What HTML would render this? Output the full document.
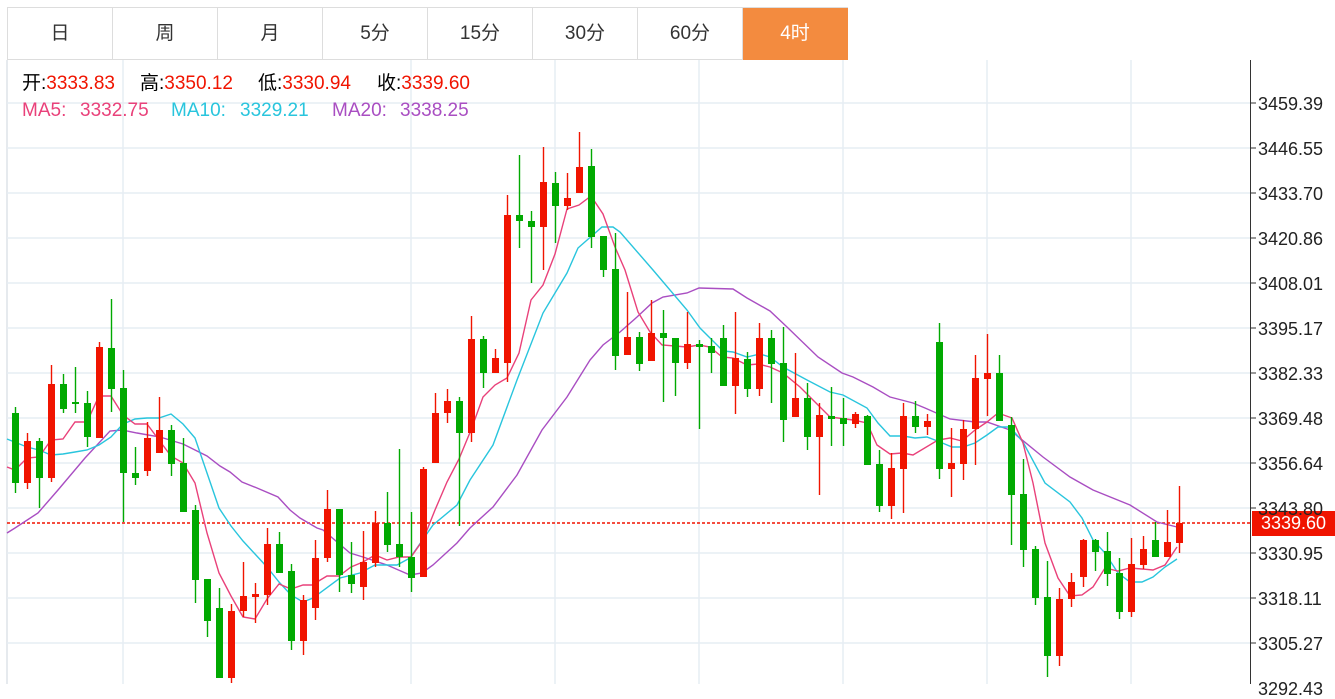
<!DOCTYPE html>
<html><head><meta charset="utf-8"><style>
*{margin:0;padding:0;box-sizing:border-box}
body{width:1335px;height:684px;overflow:hidden;background:#fff;font-family:"Liberation Sans","Noto Sans CJK SC",sans-serif;position:relative}
.tabs{position:absolute;left:7px;top:7px;height:53px;display:flex;border-top:1px solid #ddd;border-left:1px solid #ddd}
.tabs div{width:105px;height:52px;border-right:1px solid #ddd;border-bottom:1px solid #ddd;font-size:19px;color:#333;text-align:center;line-height:52px}
.tabs div.on{background:#f38b3f;color:#fff;border-color:#f38b3f}
.t{position:absolute;font-size:19px;white-space:pre;line-height:22px}
.r{color:#f01400}
.ax{position:absolute;left:1258px;font-size:18px;color:#222;line-height:20px}
</style></head><body>
<svg width="1335" height="684" style="position:absolute;left:0;top:0">
<g stroke="#e6edf3" stroke-width="1.5">
<line x1="7" y1="60" x2="7" y2="684" stroke="#dde3e8"/>
<path d="M7 103H1250M7 148H1250M7 193H1250M7 238H1250M7 283H1250M7 328H1250M7 373H1250M7 418H1250M7 463H1250M7 508H1250M7 553H1250M7 598H1250M7 643H1250"/>
<path d="M123 60V684M411 60V684M555 60V684M699 60V684M843 60V684M987 60V684M1131 60V684"/>
</g>
<line x1="1250.5" y1="60" x2="1250.5" y2="684" stroke="#333" stroke-width="1"/>
<path d="M1250 103h6M1250 148h6M1250 193h6M1250 238h6M1250 283h6M1250 328h6M1250 373h6M1250 418h6M1250 463h6M1250 508h6M1250 553h6M1250 598h6M1250 643h6" stroke="#333"/>
<line x1="7" y1="523" x2="1250" y2="523" stroke="#f01400" stroke-width="1.5" stroke-dasharray="3,2"/>
<g fill="none" stroke-width="1.4">
<polyline stroke="#a94ec2" points="7,533 15,528 38,513 58,490 85,458 110,431 122,430 137,433 160,437 183,444 207,456 220,466 230,472 242,482 257,488 278,497 290,510 300,518 317,528 323,530 350,553 363,557 387,565 410,575 422,573 433,565 457,543 470,528 493,507 517,475 542,430 567,397 590,360 603,345 620,332 637,317 652,303 663,297 687,293 699,288 733,289 747,298 770,311 787,327 818,357 842,373 853,377 873,387 890,397 913,403 925,408 950,419 975,422 987,422 1010,430 1043,457 1070,477 1093,490 1130,505 1157,522 1177,527"/>
<polyline stroke="#29c5dd" points="7,439 27,447 39,450 51,455 63,454 75,452 87,450 99,445 111,437 123,424 135,419 147,418 159,418 171,414 183,424 195,438 207,473 219,508 231,526 243,541 255,554 267,567 279,582 291,595 303,602 313,598 340,578 360,573 375,565 397,565 410,558 433,525 457,505 470,480 493,445 517,380 543,313 567,273 578,248 602,227 613,227 620,232 653,270 687,310 700,328 723,351 733,352 747,357 760,354 770,357 783,367 807,380 830,392 843,395 867,408 878,423 890,436 903,436 915,438 927,437 940,442 952,447 963,447 975,443 987,435 998,427 1010,427 1023,442 1045,483 1070,502 1082,518 1093,540 1105,553 1118,573 1130,582 1142,582 1153,577 1165,567 1177,559"/>
<polyline stroke="#e9417a" points="7,467 15,470 27,458 39,457 51,440 63,439 75,422 87,422 99,396 111,396 123,415 135,424 147,424 159,440 171,456 183,463 195,483 207,533 219,573 231,596 243,617 255,619 267,599 279,584 291,589 303,585 312,585 327,576 339,576 351,567 363,562 375,555 387,560 399,557 411,557 423,540 435,510 447,482 459,459 471,430 483,397 495,385 507,378 519,353 531,300 543,285 555,254 567,209 579,205 591,196 603,214 615,247 625,270 638,312 650,332 662,345 687,347 699,345 710,347 722,357 733,358 747,365 758,364 770,367 783,373 800,387 813,400 830,417 853,420 867,423 877,445 890,454 902,453 913,455 938,440 950,438 962,441 975,430 987,422 998,413 1012,418 1023,443 1033,483 1045,543 1058,578 1070,596 1082,595 1093,587 1105,568 1118,571 1130,568 1142,569 1153,570 1165,565 1177,547"/>
</g>
<path stroke="#01a901" stroke-width="1.4" fill="none" d="M15.5 407V493M39.5 438V508M63.5 374V413M75.5 367V413M87.5 391V447M111.5 299V412M123.5 370V522M135.5 447V485M171.5 425V476M183.5 438V512M195.5 505V603M207.5 579V637M219.5 588V678M279.5 532V573M291.5 564V650M339.5 509V592M351.5 542V593M387.5 492V552M399.5 449V567M411.5 512V592M459.5 397V526M483.5 336V388M519.5 155V248M531.5 211V283M555.5 172V243M591.5 149V248M603.5 236V277M615.5 233V370M639.5 332V371M663.5 310V402M675.5 338V396M699.5 340V429M711.5 338V373M723.5 325V386M747.5 352V397M771.5 330V403M783.5 327V442M807.5 383V450M831.5 387V446M843.5 398V446M867.5 415V465M879.5 450V512M915.5 401V433M939.5 323V479M999.5 355V421M1011.5 417V545M1023.5 459V567M1035.5 546V605M1047.5 561V677M1095.5 539V571M1107.5 532V586M1119.5 558V619M1155.5 522V557"/>
<path fill="#01a901" d="M12 413h7v70h-7zM36 441h7v37h-7zM60 384h7v25h-7zM72 402h7v2h-7zM84 403h7v34h-7zM108 348h7v41h-7zM120 388h7v85h-7zM132 473h7v5h-7zM168 430h7v34h-7zM180 463h7v49h-7zM192 510h7v70h-7zM204 579h7v42h-7zM216 608h7v70h-7zM276 544h7v29h-7zM288 571h7v70h-7zM336 509h7v66h-7zM348 575h7v9h-7zM384 523h7v22h-7zM396 544h7v13h-7zM408 557h7v21h-7zM456 401h7v32h-7zM480 339h7v34h-7zM516 215h7v6h-7zM528 221h7v6h-7zM552 183h7v23h-7zM588 166h7v71h-7zM600 236h7v34h-7zM612 269h7v87h-7zM636 337h7v27h-7zM660 333h7v5h-7zM672 338h7v25h-7zM696 344h7v3h-7zM708 346h7v7h-7zM720 338h7v48h-7zM744 359h7v30h-7zM768 338h7v26h-7zM780 363h7v57h-7zM804 398h7v39h-7zM828 416h7v3h-7zM840 418h7v6h-7zM864 416h7v49h-7zM876 464h7v42h-7zM912 416h7v11h-7zM936 342h7v127h-7zM996 373h7v48h-7zM1008 425h7v70h-7zM1020 494h7v56h-7zM1032 549h7v49h-7zM1044 597h7v59h-7zM1092 540h7v12h-7zM1104 551h7v23h-7zM1116 573h7v39h-7zM1152 540h7v17h-7z"/>
<path stroke="#f01400" stroke-width="1.4" fill="none" d="M27.5 433V489M51.5 365V482M99.5 342V438M147.5 422V476M159.5 397V453M231.5 604V683M243.5 562V617M255.5 583V623M267.5 528V605M303.5 595V655M315.5 540V620M327.5 490V562M363.5 531V600M375.5 511V567M423.5 467V577M435.5 393V463M447.5 389V423M471.5 316V442M495.5 349V373M507.5 195V382M543.5 147V270M567.5 173V210M579.5 132V193M627.5 292V355M651.5 300V361M687.5 312V369M735.5 312V414M759.5 323V396M795.5 353V417M819.5 403V495M855.5 412V428M891.5 453V519M903.5 403V513M927.5 414V435M951.5 428V497M963.5 420V480M975.5 355V465M987.5 334V416M1059.5 588V666M1071.5 573V607M1083.5 539V587M1131.5 538V617M1143.5 536V569M1167.5 510V557M1179.5 486V553"/>
<path fill="#f01400" d="M24 441h7v42h-7zM48 384h7v94h-7zM96 347h7v91h-7zM144 438h7v33h-7zM156 430h7v23h-7zM228 611h7v67h-7zM240 596h7v15h-7zM252 594h7v3h-7zM264 544h7v51h-7zM300 600h7v41h-7zM312 558h7v50h-7zM324 509h7v49h-7zM360 562h7v25h-7zM372 523h7v40h-7zM420 469h7v108h-7zM432 413h7v50h-7zM444 401h7v12h-7zM468 339h7v94h-7zM492 358h7v15h-7zM504 215h7v148h-7zM540 182h7v45h-7zM564 198h7v8h-7zM576 167h7v26h-7zM624 337h7v18h-7zM648 333h7v28h-7zM684 344h7v19h-7zM732 358h7v28h-7zM756 338h7v51h-7zM792 398h7v19h-7zM816 415h7v22h-7zM852 414h7v10h-7zM888 468h7v38h-7zM900 416h7v53h-7zM924 421h7v6h-7zM948 463h7v6h-7zM960 429h7v35h-7zM972 378h7v51h-7zM984 373h7v6h-7zM1056 599h7v57h-7zM1068 582h7v17h-7zM1080 540h7v37h-7zM1128 564h7v48h-7zM1140 549h7v16h-7zM1164 542h7v15h-7zM1176 523h7v20h-7z"/>
<rect x="1252" y="511" width="83" height="25" fill="#f01400"/>
</svg>
<div class="tabs"><div>日</div><div>周</div><div>月</div><div>5分</div><div>15分</div><div>30分</div><div>60分</div><div class="on">4时</div></div>
<div class="t" style="top:73px;left:22px">开:<span class="r">3333.83</span></div>
<div class="t" style="top:73px;left:140px">高:<span class="r">3350.12</span></div>
<div class="t" style="top:73px;left:258px">低:<span class="r">3330.94</span></div>
<div class="t" style="top:73px;left:377px">收:<span class="r">3339.60</span></div>
<div class="t" style="top:100px;left:22px;color:#e9417a">MA5:</div>
<div class="t" style="top:100px;left:80px;color:#e9417a">3332.75</div>
<div class="t" style="top:100px;left:171px;color:#29c5dd">MA10:</div>
<div class="t" style="top:100px;left:240px;color:#29c5dd">3329.21</div>
<div class="t" style="top:100px;left:332px;color:#a94ec2">MA20:</div>
<div class="t" style="top:100px;left:400px;color:#a94ec2">3338.25</div>
<div class="ax" style="top:94px">3459.39</div>
<div class="ax" style="top:139px">3446.55</div>
<div class="ax" style="top:184px">3433.70</div>
<div class="ax" style="top:229px">3420.86</div>
<div class="ax" style="top:274px">3408.01</div>
<div class="ax" style="top:319px">3395.17</div>
<div class="ax" style="top:364px">3382.33</div>
<div class="ax" style="top:409px">3369.48</div>
<div class="ax" style="top:454px">3356.64</div>
<div class="ax" style="top:499px">3343.80</div>
<div class="ax" style="top:544px">3330.95</div>
<div class="ax" style="top:589px">3318.11</div>
<div class="ax" style="top:634px">3305.27</div>
<div class="ax" style="top:679px">3292.43</div>
<div class="ax" style="top:513px;left:1261px;color:#fff">3339.60</div>
</body></html>
